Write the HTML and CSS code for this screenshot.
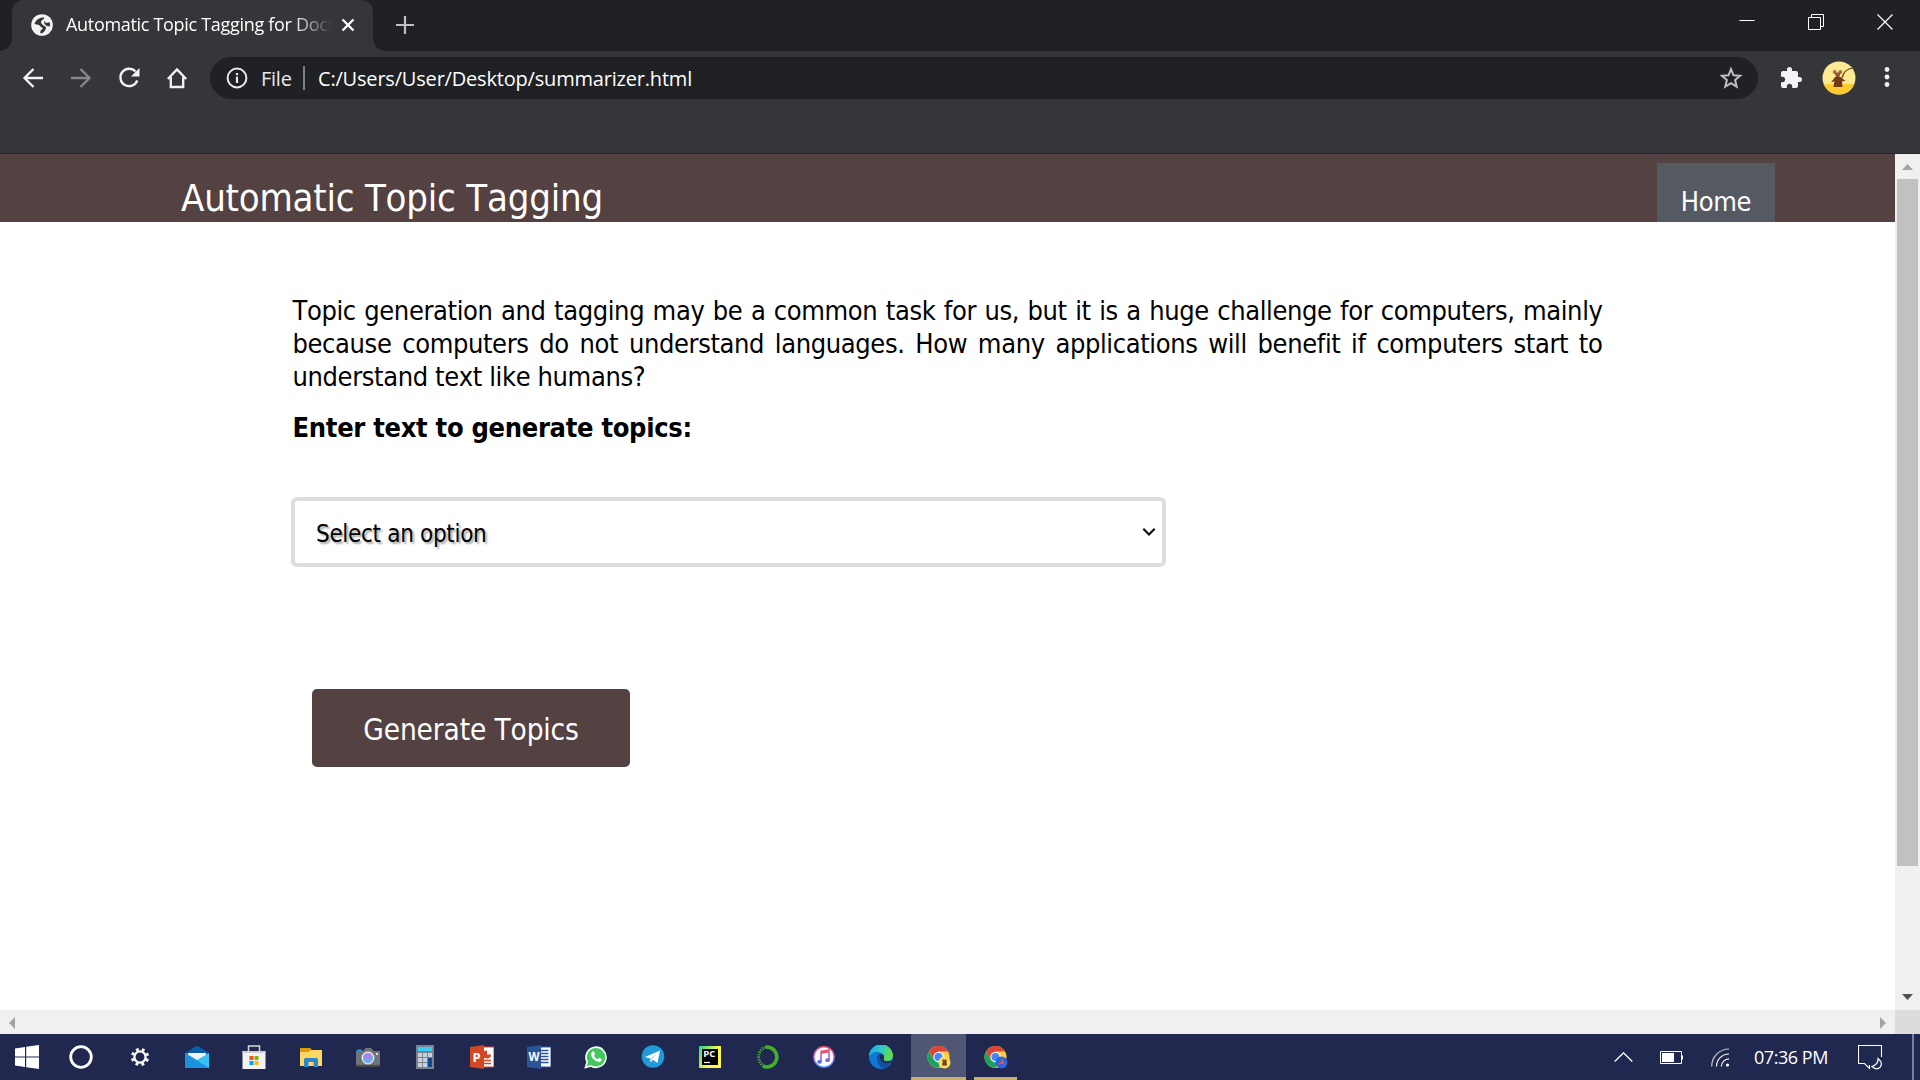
FILE: index.html
```html
<!DOCTYPE html>
<html lang="en">
<head>
<meta charset="utf-8">
<title>Automatic Topic Tagging for Documents</title>
<link rel="stylesheet" href="styles.css">
</head>
<body>
<div class="screen">
  <header class="tabstrip">
    <div class="tab">
      <svg class="favicon" width="22" height="22" viewBox="0 0 22 22"><circle cx="11" cy="11" r="10.800" fill="#f1f3f4"/><path d="M3.500 10Q4.500 5 12 3.200L13.500 4.500Q9.500 6.500 10 9L12.500 11.500 15 13Q15 17 10.500 19.500L9 18.500Q9.500 15.500 12 14.500L9.500 12.500 8 11Z" fill="#35363a"/><path d="M13 6.500 15 9 18.800 8.300Q19.500 11 18.500 12.500Q15.500 12.500 13.500 10Z" fill="#35363a"/></svg>
      <span class="tab-title">Automatic Topic Tagging for Docu</span>
      <svg class="tab-close" width="14" height="14" viewBox="0 0 14 14"><path d="M1.500 1.500 12.500 12.500M12.500 1.500 1.500 12.500" stroke="#fff" stroke-width="2.300"/></svg>
    </div>
    <svg class="new-tab" width="20" height="20" viewBox="0 0 20 20"><path d="M10 1V19M1 10H19" stroke="#bdc1c6" stroke-width="2.200"/></svg>
    <div class="window-controls">
      <svg width="16" height="16" viewBox="0 0 16 16"><path d="M.5 6.500H15.500" stroke="#fff"/></svg>
      <svg width="16" height="16" viewBox="0 0 16 16"><path d="M.5 3.500H12.500V15.500H.5ZM3.500 3.500V.5H15.500V12.500H12.500" fill="none" stroke="#fff"/></svg>
      <svg width="16" height="16" viewBox="0 0 16 16"><path d="M.5.5 15.500 15.500M15.500.5.5 15.500" stroke="#fff" stroke-width="1.200"/></svg>
    </div>
  </header>

  <nav class="toolbar">
    <div class="nav-icons">
      <svg width="22" height="22" viewBox="0 0 22 22"><path d="M21 11H2.500M11.500 2 2.500 11 11.500 20" fill="none" stroke="#f1f3f4" stroke-width="2.300"/></svg>
      <svg width="22" height="22" viewBox="0 0 22 22"><path d="M1 11H19.500M10.500 2 19.500 11 10.500 20" fill="none" stroke="#86888b" stroke-width="2.300"/></svg>
      <svg width="22" height="22" viewBox="0 0 22 22"><path d="M17.500 4.500A8.700 8.700 0 1 0 19.300 13.500" fill="none" stroke="#f1f3f4" stroke-width="2.300"/><path d="M21.500 1V9.500H13Z" fill="#f1f3f4"/></svg>
      <svg width="22" height="22" viewBox="0 0 22 22"><path d="M1.800 12 11 2.500 20.200 12M4.800 10V20H17.200V10" fill="none" stroke="#f1f3f4" stroke-width="2.300"/></svg>
    </div>
    <div class="omnibox">
      <svg width="22" height="22" viewBox="0 0 22 22"><circle cx="11" cy="11" r="9.400" fill="none" stroke="#e8eaed" stroke-width="2"/><path d="M11 6V8.200M11 9.800V16" stroke="#e8eaed" stroke-width="2.200"/></svg>
      <span class="scheme">File</span>
      <span class="divider"></span>
      <span class="url">C:/Users/User/Desktop/summarizer.html</span>
      <svg class="star" width="24" height="24" viewBox="0 0 24 24"><path d="M12 3.200 14.500 9.300 21.100 9.800 16.100 14.100 17.700 20.600 12 17.100 6.300 20.600 7.900 14.100 2.900 9.800 9.500 9.300Z" fill="none" stroke="#bdc1c6" stroke-width="2"/></svg>
    </div>
    <svg class="extensions" width="24" height="24" viewBox="0 0 24 24"><path d="M20.500 11H19V7a2 2 0 0 0-2-2h-4V3.500a2.500 2.500 0 0 0-5 0V5H4a2 2 0 0 0-1.990 2v3.800H3.500c1.490 0 2.700 1.210 2.700 2.700s-1.210 2.700-2.700 2.700H2V20a2 2 0 0 0 2 2h3.800v-1.500c0-1.490 1.210-2.700 2.700-2.700s2.700 1.210 2.700 2.700V22H17a2 2 0 0 0 2-2v-4h1.500a2.500 2.500 0 0 0 0-5Z" fill="#f1f3f4"/></svg>
    <svg class="avatar" width="34" height="34" viewBox="0 0 34 34"><defs><clipPath id="face"><circle cx="17" cy="17" r="16.500"/></clipPath></defs><g clip-path="url(#face)"><path d="M0 0H34V34H0Z" fill="#fbea91"/><path d="M0 23H34V34H0Z" fill="#fdcb2f"/><path d="M20 17Q22 8 31 7" fill="none" stroke="#7a3b1c" stroke-width="1.200"/><path d="M13 16H18.500L23.500 20 20 20.300 20.500 26H11.500L12.300 20.300 9 21.500Z" fill="#743a18"/><circle cx="12.700" cy="11" r="2" fill="#a8734f"/><circle cx="18.300" cy="11" r="2" fill="#a8734f"/><path d="M12.500 11.500H18.500L17.500 16H14Z" fill="#8e5433"/></g></svg>
    <svg class="kebab" width="6" height="22" viewBox="0 0 6 22"><g fill="#f1f3f4"><circle cx="3" cy="3.500" r="2.400"/><circle cx="3" cy="11" r="2.400"/><circle cx="3" cy="18.500" r="2.400"/></g></svg>
  </nav>

  <div class="viewport">
    <main class="page">
      <div class="site-header">
        <h1 class="site-title">Automatic Topic Tagging</h1>
        <a class="home-link">Home</a>
      </div>
      <div class="content">
        <p class="intro">Topic generation and tagging may be a common task for us, but it is a huge challenge for computers, mainly because computers do not understand languages. How many applications will benefit if computers start to understand text like humans?</p>
        <h2 class="prompt">Enter text to generate topics:</h2>
        <div class="select"><span>Select an option</span>
          <svg width="14" height="10" viewBox="0 0 14 10"><path d="M1.300 1.800 7 7.500 12.700 1.800" fill="none" stroke="#111" stroke-width="2.200"/></svg>
        </div>
        <button class="generate">Generate Topics</button>
      </div>
    </main>
    <div class="scroll-y">
      <svg width="11" height="6" viewBox="0 0 11 6"><path d="M5.500 0 11 6H0Z" fill="#a3a3a3"/></svg>
      <div class="thumb"></div>
      <svg class="down" width="11" height="6" viewBox="0 0 11 6"><path d="M0 0H11L5.500 6Z" fill="#505050"/></svg>
    </div>
    <div class="scroll-x">
      <svg width="6" height="12" viewBox="0 0 6 12"><path d="M6 0V12L0 6Z" fill="#a3a3a3"/></svg>
      <svg width="6" height="12" viewBox="0 0 6 12"><path d="M0 0V12L6 6Z" fill="#a3a3a3"/></svg>
    </div>
    <div class="corner"></div>
  </div>

  <footer class="taskbar">
    <div class="app start"><svg viewBox="0 0 24 24"><path d="M0 3.500 10 2V11.400H0ZM11.200 1.800 24 0V11.400H11.200ZM0 12.600H10V22L0 20.500ZM11.200 12.600H24V24L11.200 22.200Z" fill="#fff"/></svg></div>
    <div class="app cortana"><svg viewBox="0 0 24 24"><circle cx="12" cy="12" r="10.300" fill="none" stroke="#fff" stroke-width="2.800"/></svg></div>
    <div class="app settings"><svg viewBox="0 0 24 24"><circle cx="12" cy="12" r="5.600" fill="none" stroke="#fff" stroke-width="2.300"/><circle cx="12" cy="12" r="7.700" fill="none" stroke="#fff" stroke-width="2.800" stroke-dasharray="2.800 3.248" stroke-dashoffset="-1.700"/></svg></div>
    <div class="app"><svg viewBox="0 0 24 24"><path d="M0 8 12 .7 24 8V12H0Z" fill="#0b5cab"/><path d="M3 8H21V16H3Z" fill="#f4f4f4"/><path d="M0 8 12 15 24 8V23H0Z" fill="#35c2f3"/><path d="M0 8 24 23H0Z" fill="#1b91df"/></svg></div>
    <div class="app store"><svg viewBox="0 0 24 24"><path d="M6.500 8V1H17.500V8" fill="none" stroke="#d5d5d7" stroke-width="1.500"/><path d="M.5 6H23.500V24H.5Z" fill="#f2f2f2"/><path d="M.5 6H23.500V8H.5Z" fill="#d0d0d2"/><path d="M7.500 11h4v4h-4Z" fill="#f25022"/><path d="M12.500 11h4v4h-4Z" fill="#7fba00"/><path d="M7.500 16h4v4h-4Z" fill="#00a4ef"/><path d="M12.500 16h4v4h-4Z" fill="#ffb900"/></svg></div>
    <div class="app"><svg viewBox="0 0 24 24"><path d="M1 3H11L12.500 5H23V21H1Z" fill="#ffd763"/><path d="M1 3H11L12 4.500 10 7H1Z" fill="#e09b0b"/><path d="M5 22V14.500Q5 13 6.500 13H17.500Q19 13 19 14.500V22H14.500V17H9.500V22Z" fill="#2b88d0"/></svg></div>
    <div class="app"><svg viewBox="0 0 24 24"><rect x="1" y="4.500" width="5" height="3" rx="1" fill="#1da1e6"/><path d="M0 6H7L9.500 3H15L17.500 6H24V21.500H0Z" fill="#6f7478"/><path d="M0 20H24V22H0Z" fill="#43474a"/><circle cx="12" cy="13" r="5.800" fill="#75a7f0" stroke="#eee" stroke-width="1.300"/><path d="M7.500 11Q10 6.500 15 9L13 14Z" fill="#b87be8"/><rect x="20" y="8" width="2" height="2" fill="#ddd"/></svg></div>
    <div class="app"><svg viewBox="0 0 24 24"><path d="M3 0H21V24H3Z" fill="#7a838d"/><path d="M5 2H19V6H5Z" fill="#36cdf7"/><path d="M5 8h4v4H5ZM10 8h4v4h-4ZM15 8h4v4h-4ZM5 13h4v4H5ZM10 13h4v4h-4ZM5 18h4v4H5ZM10 18h4v4h-4Z" fill="#c9d3dc"/><path d="M15 13H19V22H15Z" fill="#12498c"/></svg></div>
    <div class="app"><svg viewBox="0 0 24 24"><path d="M12 2H24V22H12Z" fill="#fff" stroke="#d24726"/><circle cx="17" cy="9.500" r="4" fill="#d24726"/><path d="M17 9.500V5A4.500 4.500 0 0 1 21.500 9.500Z" fill="#fff"/><path d="M14 15.500H21M14 18.500H21" stroke="#d24726" stroke-width="1.300"/><path d="M0 2 14 0V24L0 22Z" fill="#d24726"/><text class="glyph" x="2.500" y="16.500" font-size="13">P</text></svg></div>
    <div class="app"><svg viewBox="0 0 24 24"><path d="M12 2H24V22H12Z" fill="#fff" stroke="#2a5699"/><path d="M14 5.500H21.500M14 8.500H21.500M14 11.500H21.500M14 14.500H21.500M14 17.500H21.500" stroke="#2a5699" stroke-width="1.300"/><path d="M0 2 14 0V24L0 22Z" fill="#2a5699"/><text class="glyph" x="1.500" y="16" font-size="12" textLength="11" lengthAdjust="spacingAndGlyphs">W</text></svg></div>
    <div class="app"><svg viewBox="0 0 24 24"><path d="M1.500 22.500 3.200 17A10 10 0 1 1 7 20.900Z" fill="#43c65b" stroke="#f4f8f4" stroke-width="1.700"/><path d="M8.200 6.500 10 6.600 11 9.300 9.900 10.800Q11.200 13.200 13.800 14.200L15.200 12.700 17.800 14Q17.700 17 14.900 17 11.500 16.700 8.800 13.600 5.900 10 8.200 6.500Z" fill="#fff"/></svg></div>
    <div class="app"><svg viewBox="0 0 24 24"><circle cx="12" cy="11.500" r="11.300" fill="#239ad8"/><path d="M4 12 19 5.500 16.500 18 12 14.800 9.500 17.500 9.200 13.500Z" fill="#fff"/><path d="M9.200 13.500 16.500 8 10.800 14.200 9.500 17.500Z" fill="#b9d3e4"/></svg></div>
    <div class="app"><svg viewBox="0 0 24 24"><defs><linearGradient id="pc" x1="0" y1="0" x2=".7" y2=".4"><stop offset="0" stop-color="#21d789"/><stop offset="1" stop-color="#fcf84a"/></linearGradient></defs><path d="M1 1H23V23H1Z" fill="url(#pc)"/><path d="M4 4H20V20H4Z" fill="#000"/><path d="M6 17.500H12" stroke="#fff" stroke-width="1.200"/><text class="glyph" x="5.300" y="11.800" font-size="8" textLength="12" lengthAdjust="spacingAndGlyphs">PC</text></svg></div>
    <div class="app"><svg viewBox="0 0 24 24"><path d="M11 2A10 10 0 1 1 8 21.200" fill="none" stroke="#43b02a" stroke-width="3.600"/><path d="M9 21A10.300 10.300 0 0 1 12 1.800" fill="none" stroke="#43b02a" stroke-width="3" stroke-dasharray="1.300 1.200"/></svg></div>
    <div class="app"><svg viewBox="0 0 24 24"><defs><linearGradient id="tune" x1="0" y1="0" x2="0" y2="1"><stop offset="0" stop-color="#f3546c"/><stop offset=".55" stop-color="#a95be0"/><stop offset="1" stop-color="#3f8df4"/></linearGradient></defs><circle cx="12" cy="12" r="10.200" fill="#fff" stroke="url(#tune)" stroke-width="1.400"/><path d="M9 16.500V6.500L17 5V15" fill="none" stroke="url(#tune)" stroke-width="1.600"/><path d="M9 6.500 17 5V7.500L9 9Z" fill="#ee566f"/><ellipse cx="7.500" cy="16.800" rx="2.300" ry="1.900" fill="#4b68ed"/><ellipse cx="15.500" cy="15.200" rx="2.300" ry="1.900" fill="#7662ea"/></svg></div>
    <div class="app"><svg viewBox="0 0 24 24"><defs><linearGradient id="edge" x1="0" y1="0" x2="1" y2=".3"><stop offset="0" stop-color="#1b9de2"/><stop offset=".5" stop-color="#2cc5d2"/><stop offset="1" stop-color="#63dc49"/></linearGradient></defs><circle cx="12" cy="12" r="12" fill="#0c78d1"/><path d="M0 11.500A12 12 0 0 1 24 11Q23.500 16 18 16 14 16 14.500 13.500 16 11 13 8.500 6 4 0 11.500Z" fill="url(#edge)"/><path d="M8 13Q8 8.500 12 8.500 15.500 9 15 12 13.500 14 14.500 15.500 17 18 23 15.500 20 22 14.500 23.500 8 20.500 8 13Z" fill="#124f9c"/><path d="M11.500 9.500Q16 10 14.500 13.500 14.200 15.500 17 16.500L24 16 24.500 17.500 15.500 18Q9 14 11.500 9.500Z" fill="#202850"/></svg></div>
    <div class="app active"><svg viewBox="0 0 24 24"><circle cx="11.500" cy="12" r="11" fill="#ffcd42"/><path d="M2 6.500A11 11 0 0 1 21 6.500H11.500L7 14Z" fill="#dc4437"/><path d="M2 6.500A11 11 0 0 0 11.500 23L16 15 7 14.500Z" fill="#1da160"/><circle cx="11.500" cy="12" r="5.200" fill="#fff"/><circle cx="11.500" cy="12" r="4.100" fill="#4687f4"/><circle cx="17.500" cy="17.500" r="6" fill="#fbdd5c"/><path d="M15.500 14 17.500 15 19.500 14V17L20 20.500H15L15.700 17Z" fill="#74411d"/></svg></div>
    <div class="app running"><svg viewBox="0 0 24 24"><circle cx="11.500" cy="12" r="11" fill="#ffcd42"/><path d="M2 6.500A11 11 0 0 1 21 6.500H11.500L7 14Z" fill="#dc4437"/><path d="M2 6.500A11 11 0 0 0 11.500 23L16 15 7 14.500Z" fill="#1da160"/><circle cx="11.500" cy="12" r="5.200" fill="#fff"/><circle cx="11.500" cy="12" r="4.100" fill="#4687f4"/><circle cx="17.500" cy="17.500" r="6" fill="#2467e6"/><path d="M18.500 13 20.500 20 17.500 18.500 14 20 14.500 18 17 17Z" fill="#ec4f50"/></svg></div>

    <div class="tray">
      <svg width="19" height="10" viewBox="0 0 19 10"><path d="M.7 9.500 9.500.8 18.300 9.500" fill="none" stroke="#fff" stroke-width="1.300"/></svg>
      <svg class="battery" width="23" height="13" viewBox="0 0 23 13"><path d="M.5.500H21.500V12.500H.5Z" fill="none" stroke="#fff"/><path d="M2 2H14V11H2ZM22 4.500H23V8.500H22Z" fill="#fff"/></svg>
      <svg class="wifi" width="19" height="19" viewBox="0 0 19 19"><g fill="none" stroke="#fff" stroke-width="1.200"><path d="M.7 18.500A17.500 17.500 0 0 1 18 1" opacity=".75"/><path d="M5.500 18.500A12.500 12.500 0 0 1 18 6"/><path d="M10.300 18.500A8 8 0 0 1 18 10.800"/></g><circle cx="16.500" cy="17" r="1.600" fill="#fff"/></svg>
      <span class="clock">07:36 PM</span>
      <svg class="notice" width="25" height="25" viewBox="0 0 25 25"><path d="M23.500 12V.5H.5V18.500H6.500L11.500 23.500V20" fill="none" stroke="#fff" stroke-width="1.100"/><path d="M20 13.500Q20.500 19.500 14 21.500 18 25.500 22 22.500 25.500 18 20 13.500Z" fill="none" stroke="#fff" stroke-width="1.200"/></svg>
      <span class="peek"></span>
    </div>
  </footer>
</div>
</body>
</html>
```
FILE: styles.css
```css
* { box-sizing: border-box; }
body { margin: 0; overflow: hidden; font-family: "Open Sans", "Noto Sans", sans-serif; }
svg { display: block; flex: none; }
.screen { width: 1920px; height: 1080px; display: flex; flex-direction: column; background: #fff; }

/* Browser chrome */
.tabstrip { height: 51px; flex: none; display: flex; align-items: flex-start; background: #202124; padding-left: 12px; color: #fff; }
.tab { position: relative; width: 361px; height: 51px; background: #35363a; border-radius: 12px 12px 0 0; display: flex; align-items: center; padding: 0 17px 1px 19px; }
.tab::before, .tab::after { content: ""; position: absolute; bottom: 0; width: 12px; height: 12px; }
.tab::before { left: -12px; background: radial-gradient(circle at 0 0, #202124 11.500px, #35363a 12px); }
.tab::after { right: -12px; background: radial-gradient(circle at 100% 0, #202124 11.500px, #35363a 12px); }
.tab-title { margin: 0 0 2px 13px; width: 275px; white-space: nowrap; font-size: 18px; line-height: 28px; letter-spacing: -0.310px; -webkit-mask-image: linear-gradient(90deg, #000 226px, transparent 266px); mask-image: linear-gradient(90deg, #000 226px, transparent 266px); }
.new-tab { margin: 15px 0 0 22px; }
.window-controls { margin: 14px 27px 0 auto; display: flex; gap: 53px; }

.toolbar { height: 103px; flex: none; display: flex; align-items: flex-start; background: #35363a; border-bottom: 1px solid #242528; padding: 6px 30px 0 22px; color: #fff; }
.nav-icons { display: flex; gap: 26px; margin-top: 10px; }
.omnibox { width: 1548px; height: 42px; margin-left: 22px; padding: 0 15px; display: flex; align-items: center; background: #202124; border-radius: 21px; font-size: 20px; line-height: 28px; white-space: nowrap; }
.nav-icons + .omnibox > svg:first-child { margin-left: 1px; }
.scheme { width: 31px; margin-left: 13px; padding-top: 2px; letter-spacing: -0.250px; color: #e8eaed; }
.divider { width: 2px; height: 24px; margin-left: 11px; background: #7d7f83; }
.url { margin-left: 13px; padding-top: 2px; letter-spacing: -0.190px; }
.star { margin-left: auto; }
.extensions { margin: 9px 0 0 21px; }
.avatar { margin: 4px 0 0 19px; }
.kebab { margin: 9px 0 0 auto; }

/* Page area with its scrollbars */
.viewport { flex: 1; display: grid; grid-template: 856px 24px / 1895px 25px; }
.page { overflow: hidden; font-family: "DejaVu Sans Condensed", "DejaVu Sans", sans-serif; font-stretch: condensed; font-kerning: none; color: #000; }
.site-header { height: 68px; padding: 9px 120px 0 181px; display: flex; justify-content: space-between; background: #544141; color: #fff; }
.site-title { margin: 13px 0 0; font-size: 38px; line-height: 44px; font-weight: 400; letter-spacing: -0.220px; white-space: nowrap; }
.home-link { width: 118px; padding-top: 23px; text-align: center; background: #555961; font-size: 27px; line-height: 32px; letter-spacing: -0.300px; }
.content { padding: 72px 0 0 291px; display: flex; flex-direction: column; align-items: flex-start; }
.intro { width: 1310px; margin: 0 0 0 1.500px; font-size: 27px; line-height: 33px; letter-spacing: -0.380px; text-align: justify; }
.prompt { margin: 19px 0 0 1.500px; font-size: 27px; line-height: 32px; letter-spacing: -0.290px; white-space: nowrap; }
.select { width: 875px; height: 70px; margin-top: 53px; padding: 3px 6px 0 21px; display: flex; align-items: center; justify-content: space-between; border: 4px solid #ddd; border-radius: 6px; font-size: 24px; letter-spacing: -0.320px; text-shadow: 2px 2px 2px rgba(0, 0, 0, .35); }
.select svg { margin-bottom: 3px; }
.generate { width: 318px; height: 78px; margin: 122px 0 0 21px; padding: 3px 0 0; border: 0; border-radius: 5px; background: #544141; color: #fff; font: 29.500px "DejaVu Sans Condensed", "DejaVu Sans", sans-serif; font-kerning: none; letter-spacing: -0.130px; }

.scroll-y { background: #f0f0f0; display: flex; flex-direction: column; align-items: center; padding: 10px 0; }
.thumb { width: 21px; height: 687px; margin-top: 9px; background: #c1c1c1; }
.down { margin-top: auto; }
.scroll-x { background: #f0f0f0; display: flex; align-items: center; justify-content: space-between; padding: 1px 9px 0; }
.corner { background: #dcdcdc; }

/* Windows taskbar */
.taskbar { height: 46px; flex: none; display: flex; background: #202850; color: #fff; }
.app { width: 57px; height: 46px; display: flex; justify-content: center; padding-top: 11px; }
.app svg { width: 24px; height: 24px; }
.start, .cortana { width: 54px; }
.settings { margin-left: 3px; }
.active { width: 55px; margin: 0 1px 0 2px; background: #505775; border-bottom: 3px solid #c8b06e; }
.running { width: 43px; margin: 0 7px; border-bottom: 3px solid #c8b06e; }
.glyph { fill: #fff; font-family: "Open Sans", sans-serif; font-weight: 700; }
.tray { margin-left: auto; display: flex; align-items: center; padding: 0 6px 0 0; }
.battery { margin-left: 27px; }
.wifi { margin-left: 28px; }
.clock { width: 77px; margin-left: 24px; font-size: 18px; line-height: 26px; letter-spacing: -0.450px; white-space: nowrap; }
.notice { margin-left: 27px; }
.peek { width: 2px; height: 46px; margin-left: 29px; background: #7b809a; }
```
